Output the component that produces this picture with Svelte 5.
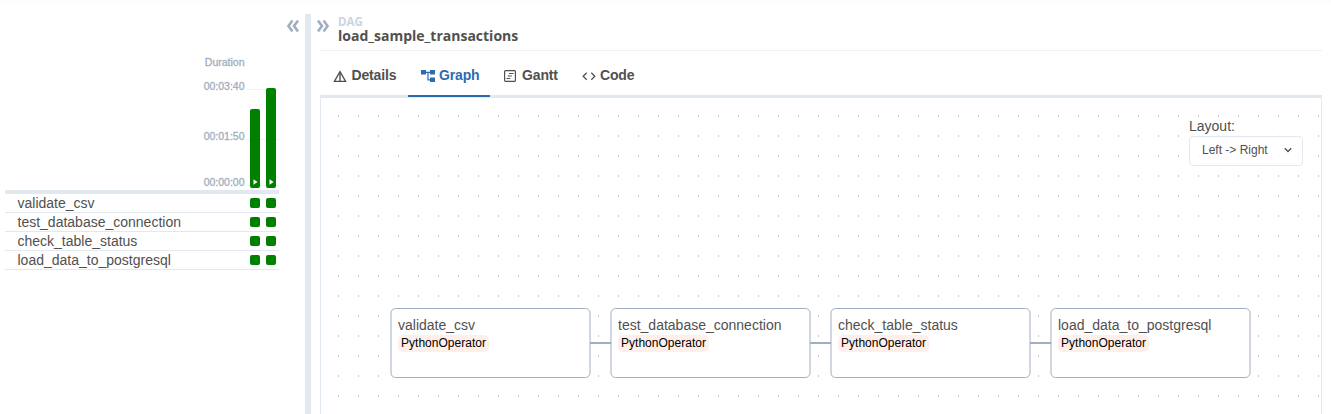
<script>
  const tasks = ['validate_csv', 'test_database_connection', 'check_table_status', 'load_data_to_postgresql'];
  const runs = [79, 100];
  const nodes = tasks.map((name, i) => ({ name, x: 70 + i * 220 }));
</script>

<div class="page">
  <aside>
    <div class="collapse">
      <svg width="12" height="12" viewBox="0 0 12 12"><path d="M5.4 .6L1.4 6l4 5.4M11 .6L7 6l4 5.4" /></svg>
    </div>
    <div class="chart">
      <div class="axis">
        <span class="title">Duration</span>
        <span class="max">00:03:40</span>
        <span class="mid">00:01:50</span>
        <span class="zero">00:00:00</span>
      </div>
      <div class="bars">
        {#each runs as height}
          <div class="bar" style="height: {height}px">
            <svg width="5" height="6" viewBox="0 0 5 6"><path d="M.5 .3L4.6 3 .5 5.7z" fill="#fff" /></svg>
          </div>
        {/each}
      </div>
    </div>
    <div class="rows">
      {#each tasks as task}
        <div class="row"><span>{task}</span><i></i><i></i></div>
      {/each}
    </div>
  </aside>
  <div class="divider"></div>
  <main>
    <header>
      <div class="expand">
        <svg width="12" height="12" viewBox="0 0 12 12"><path d="M1 .6L5 6l-4 5.4M6.6 .6L10.6 6l-4 5.4" /></svg>
      </div>
      <div class="heading">
        <small>DAG</small>
        <strong>load_sample_transactions</strong>
      </div>
    </header>
    <nav>
      <div class="tab details">
        <svg width="14" height="14" viewBox="0 0 14 14" fill="none" stroke="currentColor"><path d="M7 2.6L12.6 12.4H1.4z" stroke-width="1.3" /><path d="M7 3.5v9" stroke-width="1.4" /></svg>
        <span>Details</span>
      </div>
      <div class="tab graph active">
        <svg width="14" height="14" viewBox="0 0 14 14" fill="currentColor"><path d="M0 1h5v4.5H0zM9 1h5v4.5H9zM9 8.5h5V13H9z" /><path d="M5 3.3h4M7 3.3v7.5h2" fill="none" stroke="currentColor" stroke-width="1.2" /></svg>
        <span>Graph</span>
      </div>
      <div class="tab gantt">
        <svg width="12" height="12" viewBox="0 0 12 12" fill="none" stroke="currentColor"><rect x=".6" y=".6" width="10.8" height="10.8" rx="1" stroke-width="1.2" /><path d="M5 3.5h4.5M3.7 6h4.1M2.4 8.5h4" stroke-width="1.1" /></svg>
        <span>Gantt</span>
      </div>
      <div class="tab code">
        <svg width="14" height="14" viewBox="0 0 14 14" fill="none" stroke="currentColor" stroke-width="1.3"><path d="M4.7 3.7L1.2 7.2l3.5 3.5M9.3 3.7l3.5 3.5-3.5 3.5" /></svg>
        <span>Code</span>
      </div>
    </nav>
    <section class="canvas">
      <svg class="flow" width="1000" height="316" viewBox="0 0 1000 316">
        <defs>
          <pattern id="dots" x="17" y="17" width="20" height="20" patternUnits="userSpaceOnUse">
            <rect width="1" height="2" fill="#c4c4c4" />
          </pattern>
        </defs>
        <rect width="1000" height="316" fill="url(#dots)" />
        {#each nodes.slice(1) as node}
          <path d="M{node.x - 21} 245h21" stroke="#a0aec0" stroke-width="2" />
        {/each}
        {#each nodes as node}
          <rect x={node.x} y="210.5" width="199" height="69" rx="4.5" fill="#fff" stroke="#a0aec0" />
          <text class="name" x={node.x + 7} y="232">{node.name}</text>
          <rect x={node.x + 7} y="237" width="91" height="17" rx="5" fill="#ffefeb" />
          <text class="operator" x={node.x + 10} y="249" textLength="85">PythonOperator</text>
        {/each}
      </svg>
      <div class="layout">
        <label for="layout">Layout:</label>
        <button id="layout">
          <span>Left -&gt; Right</span>
          <svg width="8" height="6" viewBox="0 0 8 6"><path d="M.8 1.3L4 4.5l3.2-3.2" fill="none" stroke="#51504f" stroke-width="1.4" /></svg>
        </button>
      </div>
    </section>
  </main>
</div>

<style>
  :global(body) { margin: 0; background: #fff; }
  .page {
    box-sizing: border-box;
    display: flex;
    width: 1331px;
    height: 414px;
    padding-top: 14px;
    overflow: hidden;
    background: linear-gradient(#fbfbfb, #fff 5px);
    color: #51504f;
    font-family: "Liberation Sans", Arial, sans-serif;
    font-size: 14px;
  }
  svg { display: block; flex: none; }
  aside { width: 300px; padding-left: 5px; flex: none; }
  .collapse { display: flex; justify-content: flex-end; padding: 6px 6px 0 0; height: 22px; }
  .collapse path, .expand path { fill: none; stroke: #a0aec0; stroke-width: 2.6; }
  .chart { display: flex; width: 274px; height: 148px; border-bottom: 4px solid #e2e8f0; }
  .axis {
    width: 239.5px;
    margin-right: .5px;
    padding-top: 13px;
    display: flex;
    flex-direction: column;
    align-items: flex-end;
    color: #a0aec0;
    font-size: 10.5px;
    line-height: 14px;
    -webkit-text-stroke: .3px #a0aec0;
  }
  .max { margin-top: 10px; }
  .mid { margin-top: 36px; }
  .zero { margin-top: 32px; }
  .bars {
    box-sizing: border-box;
    width: 32px;
    height: 146px;
    margin-left: 2px;
    padding: 0 3px;
    display: flex;
    align-items: flex-end;
    gap: 6px;
    background:
      linear-gradient(#edf2f7, #edf2f7) 0 47px / 32px 1px no-repeat,
      linear-gradient(#edf2f7, #edf2f7) 0 97px / 32px 1px no-repeat,
      linear-gradient(#edf2f7, #edf2f7) 0 143px / 32px 1px no-repeat;
  }
  .bar {
    box-sizing: border-box;
    width: 10px;
    display: flex;
    align-items: flex-end;
    padding: 0 0 3px 3px;
    border-radius: 2px;
    background: #008000;
  }
  .rows { width: 274px; }
  .row {
    box-sizing: border-box;
    display: flex;
    align-items: center;
    height: 19px;
    padding: 0 3px 0 12.5px;
    border-bottom: 1px solid #e2e8f0;
    line-height: 18px;
  }
  .row span { flex: 1; }
  .row i { width: 10px; height: 10px; margin-left: 6px; border-radius: 2px; background: #008000; }
  .divider { width: 6px; flex: none; background: #e2e8f0; }
  main { width: 1002px; margin-left: 9px; display: flex; flex-direction: column; }
  header { box-sizing: border-box; height: 37px; display: flex; border-bottom: 1px solid #edf2f7; }
  .expand { width: 21px; padding-top: 6px; margin-left: -3px; }
  .heading {
    display: flex;
    flex-direction: column;
    font-family: "Open Sans", "Noto Sans", sans-serif;
  }
  small { font-size: 11.5px; font-weight: 700; line-height: 15px; color: #cbd5e0; }
  strong { font-size: 14px; font-weight: 700; line-height: 14px; }
  nav { box-sizing: border-box; height: 47px; display: flex; border-bottom: 3px solid #e2e8f0; font-weight: 700; }
  .tab { box-sizing: border-box; height: 46px; display: flex; align-items: center; padding: 4px 0 0 13px; }
  .tab svg { margin-right: 4px; }
  .tab span { margin-top: -2px; letter-spacing: -.15px; }
  .details { width: 88px; }
  .details svg { margin-right: 4.5px; }
  .graph { width: 82px; }
  .gantt { width: 78px; padding-left: 14px; }
  .gantt svg { margin-right: 6px; }
  .code { padding-left: 14px; }
  .active { color: #2b6cb0; border-bottom: 2px solid #2b6cb0; padding-top: 6px; }
  .canvas { position: relative; flex: 1; border: solid #e2e8f0; border-width: 0 1px; }
  .name { font-size: 14px; fill: #51504f; }
  .operator { font-size: 12px; fill: #000; }
  .layout { position: absolute; left: 868px; top: 20px; width: 114px; }
  label { display: block; height: 18px; line-height: 17px; background: rgb(255 255 255 / .7); }
  button {
    box-sizing: border-box;
    width: 114px;
    height: 30px;
    display: flex;
    align-items: center;
    justify-content: space-between;
    padding: 0 10px 2px 12px;
    border: 1px solid #e2e8f0;
    border-radius: 4px;
    background: rgb(255 255 255 / .8);
    color: #51504f;
    font: 12px "Liberation Sans", Arial, sans-serif;
  }
</style>
